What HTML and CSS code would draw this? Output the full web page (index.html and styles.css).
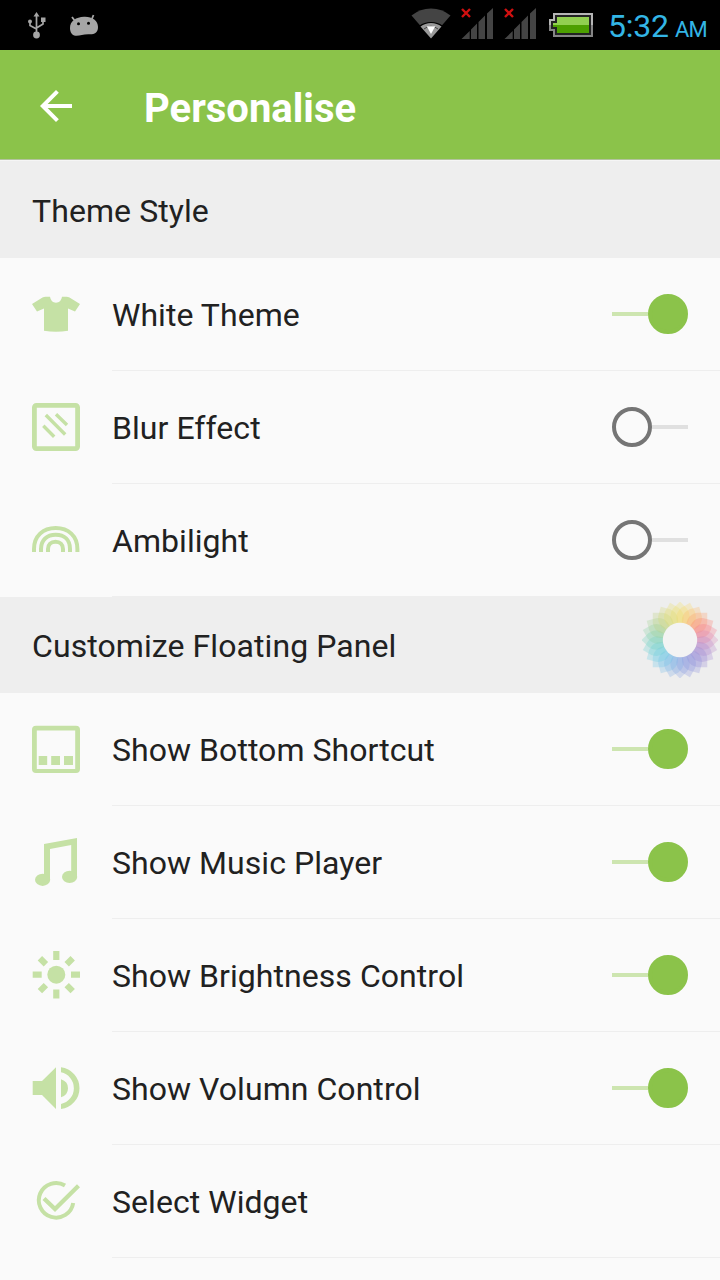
FILE: index.html
```html
<!DOCTYPE html>
<html lang="en">
<head>
    <meta charset="UTF-8">
    <meta name="viewport" content="width=device-width, initial-scale=1.0">
    <title>Personalise</title>
    <link rel="stylesheet" href="styles.css">
</head>
<body>
    <div class="status-bar">
        <svg class="usb" width="20" height="30" viewBox="0 0 20 30">
            <path d="M9.500 4V24M3 10V14.500L9.500 18M16 8V13L9.500 17" fill="none" stroke="#a5a5a5" stroke-width="1.700"/>
            <path d="M9.500 1L12.500 5.500H6.500ZM14 6.500H18.500V11H14Z" fill="#a5a5a5"/>
            <circle cx="3" cy="10.500" r="2" fill="#a5a5a5"/>
            <circle cx="9.500" cy="24" r="3.400" fill="#a5a5a5"/>
        </svg>
        <svg class="droid" width="30" height="24" viewBox="0 0 30 24">
            <path d="M3 3L6 7M24.500 1L22.500 6" stroke="#a5a5a5" stroke-width="1.800"/>
            <path d="M1 14C1 7 7 3 15 2.700C23 2.300 29 6.500 29 13C29 19 25 20.500 20 20.200C14 20 11 22 6.500 21.700C3 21.500 1 18 1 14Z" fill="#a5a5a5"/>
            <circle cx="9.500" cy="9.700" r="1.500"/>
            <circle cx="19.500" cy="9.200" r="1.500"/>
        </svg>
        <div class="status-right">
            <svg class="wifi" width="40" height="32" viewBox="0 0 40 32">
                <path d="M20 30L0.500 7.500Q9 0.500 20 0.500T39.500 7.500Z" fill="#444"/>
                <path d="M20 31L8.500 17.500Q13 14 20 14T31.500 17.500Z" fill="#000"/>
                <path d="M20 30.500L9.500 18.500Q14 15 20 15T30.500 18.500Z" fill="#999"/>
                <path d="M13 21Q20 15.500 27 21" fill="none" stroke="#444" stroke-width="1"/>
                <path d="M15.800 18.200H24.300L20 26Z" fill="#fff"/>
            </svg>
            <svg class="signal" width="33" height="32" viewBox="0 0 33 32">
                <path d="M0.500 31L8.700 23V31ZM10 31V21.500L16 15.500V31ZM17.500 31V14L24 7.500V31ZM26 31V5.500L32 0V31Z" fill="#444"/>
                <path d="M1 1L9 9M9 1L1 9" stroke="#d01010" stroke-width="2.400"/>
            </svg>
            <svg class="signal" width="33" height="32" viewBox="0 0 33 32">
                <path d="M0.500 31L8.700 23V31ZM10 31V21.500L16 15.500V31ZM17.500 31V14L24 7.500V31ZM26 31V5.500L32 0V31Z" fill="#444"/>
                <path d="M1 1L9 9M9 1L1 9" stroke="#d01010" stroke-width="2.400"/>
            </svg>
            <svg class="battery" width="44" height="24" viewBox="0 0 44 24">
                <path d="M4 0H44V24H4V18H0V6H4Z" fill="#b5b5b5"/>
                <path d="M0 12H44V24H4V18H0Z" fill="#858585"/>
                <path d="M6 2H42V22H6V16H2V8H6Z" fill="#222"/>
                <path d="M8 4H40V12H4V10H8Z" fill="#91cf50"/>
                <path d="M4 12H40V20H8V14H4Z" fill="#4c9f00"/>
            </svg>
            <span class="clock">5:32</span>
            <span class="ampm">AM</span>
        </div>
    </div>

    <header>
        <svg class="back" width="48" height="48" viewBox="0 0 24 24">
            <path d="M20 11H7.830l5.590-5.590L12 4l-8 8 8 8 1.410-1.410L7.830 13H20v-2z" fill="#fff"/>
        </svg>
        <h1>Personalise</h1>
    </header>

    <h2 class="section first">Theme Style</h2>
    <ul>
        <li>
            <svg class="icon" viewBox="0 0 48 48">
                <path d="M0 14L10.500 7.500Q12 6.700 13.500 6.700H18Q19 12.500 24 12.700Q29 12.500 30 6.700H34.500Q36 6.700 37.500 7.500L48 14L43 21.500L36 18.500V40.700Q24 43 12 40.700V18.500L5 21.500Z"/>
            </svg>
            <div class="item"><span class="label">White Theme</span><span class="switch on"></span></div>
        </li>
        <li>
            <svg class="icon line" viewBox="0 0 48 48">
                <rect x="2.400" y="2.400" width="43.200" height="43.200" rx="2" stroke-width="4.800"/>
                <path d="M13.800 12L33.200 31.500M24 11.200L35 22M11.300 22.800L22.200 33.700" stroke-width="3.400"/>
            </svg>
            <div class="item"><span class="label">Blur Effect</span><span class="switch"></span></div>
        </li>
        <li>
            <svg class="icon line" viewBox="0 0 48 48">
                <path d="M2 36V33C2 20 11 12 23.700 12S45.400 20 45.400 33V36M9 36V33C9 24 15 18.700 23.700 18.700S38 24 38 33V36M16 36V33C16 28.500 19 25.700 23.500 25.700S31 28.500 31 33V36" stroke-width="4"/>
            </svg>
            <div class="item"><span class="label">Ambilight</span><span class="switch"></span></div>
        </li>
    </ul>

    <h2 class="section">Customize Floating Panel</h2>
    <ul>
        <li>
            <svg class="icon" viewBox="0 0 48 48">
                <path d="M4 0.700H44Q48 0.700 48 4.700V44Q48 48 44 48H4Q0 48 0 44V4.700Q0 0.700 4 0.700ZM4.800 5.500V44H43.200V5.500Z" fill-rule="evenodd"/>
                <path d="M6.700 31H15.200V40H6.700ZM19.200 31H28V40H19.200ZM32 31H41V40H32Z"/>
            </svg>
            <div class="item"><span class="label">Show Bottom Shortcut</span><span class="switch on"></span></div>
        </li>
        <li>
            <svg class="icon" viewBox="0 0 48 48">
                <path d="M12 6L45 0V39H39.200V7L18 11V42H12Z"/>
                <ellipse cx="10.600" cy="41.800" rx="7.600" ry="6.100"/>
                <ellipse cx="37.600" cy="38.900" rx="7.600" ry="6.100"/>
            </svg>
            <div class="item"><span class="label">Show Music Player</span><span class="switch on"></span></div>
        </li>
        <li>
            <svg class="icon" viewBox="0 0 48 48">
                <circle cx="24.300" cy="23.700" r="9"/>
                <path d="M21.200 0H27.400V9H21.200ZM21.200 38.400H27.400V47.400H21.200ZM0.700 20.600H9.700V26.800H0.700ZM39 20.600H48V26.800H39Z"/>
                <path d="M21.200 0.500H27.400V9H21.200ZM21.200 38.400H27.400V46.900H21.200ZM1.100 20.600H9.600V26.800H1.100ZM39 20.600H47.500V26.800H39Z" transform="rotate(45 24.300 23.700)"/>
            </svg>
            <div class="item"><span class="label">Show Brightness Control</span><span class="switch on"></span></div>
        </li>
        <li>
            <svg class="icon" viewBox="0 0 48 48">
                <path d="M0.700 17H10L24 3.300V45L10 31H0.700ZM29 15.300Q36 17.500 36 24.200T29 33.300Z"/>
                <path d="M29 3.300A21 21 0 0 1 29 45V40A16.200 16.200 0 0 0 29 8.300Z"/>
            </svg>
            <div class="item"><span class="label">Show Volumn Control</span><span class="switch on"></span></div>
        </li>
        <li>
            <svg class="icon line" viewBox="0 0 48 48">
                <path d="M33 8.500A17.300 17.300 0 1 0 41.200 26" stroke-width="4"/>
                <path d="M12 21.500L23 32L46.500 8.700" stroke-width="4.300"/>
            </svg>
            <div class="item"><span class="label">Select Widget</span></div>
        </li>
    </ul>

    <svg class="floating" id="floating" viewBox="-38 -38 76 76"></svg>

    <script>
        const colors = [
            "#f4e25c", "#fad65c", "#ffb45c", "#ff9660", "#ff7868", "#f77084",
            "#d583b5", "#b482c8", "#a082d2", "#9080d2", "#8488da", "#808cdc",
            "#809ae0", "#78a8e4", "#70b8ea", "#62c4e8", "#60cce0", "#60d0d0",
            "#68d0b8", "#80cfa0", "#9cd088", "#b8d078", "#d4d66c", "#e8de60"
        ];
        const floating = document.querySelector("#floating");

        let petals = "";
        for (let i = 0; i < colors.length; i++) {
            petals += `<path d="M0 -38.500L7 -31.500Q15 -20 0 -10Q-15 -20 -7 -31.500Z" fill="${colors[i]}" opacity="0.27" transform="rotate(${i * 15})"/>`;
        }
        floating.innerHTML = petals + `<circle r="17.2" fill="#f3f3f3"/>`;
    </script>
</body>
</html>
```

FILE: styles.css
```css
body {
    margin: 0;
    height: 1280px;
    overflow: hidden;
    position: relative;
    background: #fafafa;
    color: #212121;
    font-family: Roboto, sans-serif;
}

svg {
    display: block;
    flex: none;
}

/* Status bar */
.status-bar {
    height: 50px;
    background: #000;
    display: flex;
    align-items: flex-start;
}

.usb {
    margin: 11px 0 0 27px;
}

.droid {
    margin: 14px 0 0 22px;
}

.status-right {
    margin-left: auto;
    margin-right: 12px;
    display: flex;
    color: #33b5e5;
}

.wifi {
    margin-top: 8px;
    margin-right: 10px;
}

.signal {
    margin-top: 8px;
    margin-right: 10px;
}

.battery {
    margin: 13px 15px 0 2px;
}

.clock {
    font-size: 32px;
    line-height: 52px;
    width: 67px;
    letter-spacing: -0.2px;
}

.ampm {
    font-size: 22px;
    line-height: 59px;
    width: 33px;
    letter-spacing: -0.8px;
}

/* Title bar */
header {
    height: 109px;
    background: #8bc34a;
    display: flex;
    align-items: center;
    border-bottom: 1px solid #b3c39d;
}

.back {
    margin: 2px 64px 0 32px;
}

h1 {
    margin: 8px 0 0;
    color: #fff;
    font-size: 40px;
    font-weight: bold;
}

/* List */
.section {
    margin: 0;
    height: 96px;
    line-height: 98px;
    padding-left: 32px;
    background: #eee;
    font-size: 32px;
    font-weight: normal;
    letter-spacing: 0.08px;
}

.first {
    padding-top: 1px;
    border-top: 1px solid #f5f5f5;
}

ul {
    list-style: none;
    margin: 0;
    padding: 0;
}

li {
    display: flex;
    height: 113px;
}

.icon {
    width: 48px;
    height: 48px;
    margin: 32px;
    fill: #c5e1a5;
}

.line {
    fill: none;
    stroke: #c5e1a5;
}

.item {
    flex: 1;
    display: flex;
    align-items: center;
    justify-content: space-between;
    padding-right: 32px;
    border-bottom: 1px solid #eee;
}

.label {
    font-size: 32px;
    line-height: 110px;
    padding-top: 2px;
    letter-spacing: 0.05px;
}

/* Switch */
.switch {
    width: 76px;
    height: 40px;
    display: flex;
    align-items: center;
}

.switch::before {
    content: "";
    box-sizing: border-box;
    width: 40px;
    height: 40px;
    border: 4px solid #757575;
    border-radius: 50%;
}

.switch::after {
    content: "";
    flex: 1;
    height: 4px;
    background: #e0e0e0;
}

.on {
    flex-direction: row-reverse;
}

.on::before {
    background: #8bc34a;
    border-color: #8bc34a;
}

.on::after {
    background: #cde5b0;
}

.floating {
    position: absolute;
    left: 642px;
    top: 602px;
    width: 76px;
    height: 76px;
}
```
